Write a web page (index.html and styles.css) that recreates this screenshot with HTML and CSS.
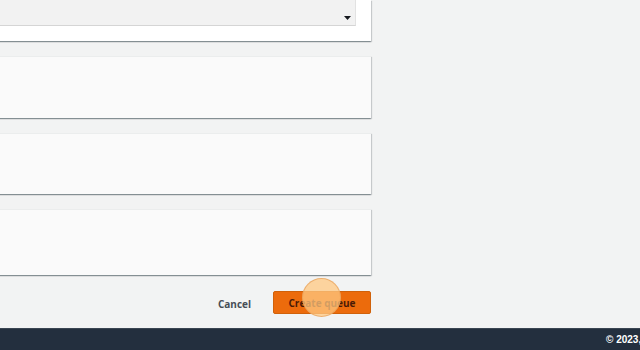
FILE: index.html
```html
<!DOCTYPE html>
<html>
<head>
<meta charset="utf-8">
<link rel="stylesheet" href="styles.css">
</head>
<body>
<div class="page">
  <main class="column">
    <section class="card card-top">
      <div class="field">
        <svg class="caret" width="7" height="4" viewBox="0 0 7 4"><path d="M0 0H7L3.5 4Z" fill="#16191f"/></svg>
      </div>
    </section>
    <section class="card card-a"></section>
    <section class="card card-b"></section>
    <section class="card card-c"></section>
    <div class="actions">
      <button class="btn-link">Cancel</button>
      <button class="btn-primary">Create queue<span class="pointer"></span></button>
    </div>
  </main>
  <footer class="footer"><span class="copy">© 2023,</span></footer>
</div>
</body>
</html>
```
FILE: styles.css
```css
* { box-sizing: border-box; }
html, body { margin: 0; padding: 0; }
body {
  background: #f2f3f3;
  font-family: "Open Sans", "Noto Sans", sans-serif;
  width: 640px;
  height: 350px;
  overflow: hidden;
}
.page {
  height: 350px;
  display: flex;
  flex-direction: column;
}
.column {
  flex: 1;
  width: 391px;
  margin-left: -20px;
  display: flex;
  flex-direction: column;
  gap: 15px;
}
.card {
  background: #fafafa;
  box-shadow: 0 1px 1px 0 rgba(0,20,30,.25), 1px 1px 1px 0 rgba(0,20,30,.14), -1px 1px 1px 0 rgba(0,20,30,.14);
  border-top: 1px solid #ebeded;
  flex: none;
}
.card-top {
  background: #fff;
  height: 41px;
  border-top: none;
  padding: 0 15px 15px 20px;
}
.field {
  height: 26px;
  background: #f2f2f2;
  border-bottom: 1px solid #d5d5d5;
  border-right: 1px solid #e2e2e2;
  position: relative;
}
.caret {
  position: absolute;
  right: 4px;
  top: 16px;
}
.card-a { height: 62px; }
.card-b { height: 61px; }
.card-c { height: 66px; }
.actions {
  display: flex;
  justify-content: flex-end;
  align-items: center;
  gap: 22px;
  margin-top: 1px;
}
.btn-link {
  background: none;
  border: none;
  font-family: inherit;
  font-weight: 700;
  font-size: 10px;
  color: #464d56;
  padding: 0;
  margin-top: 2px;
}
.btn-primary {
  position: relative;
  width: 98px;
  height: 23px;
  background: #ec6b0c;
  border: 1px solid #d0610a;
  border-radius: 2px;
  font-family: inherit;
  font-weight: 700;
  font-size: 10px;
  color: #4a1a06;
  padding: 0;
}
.pointer {
  position: absolute;
  left: 28px;
  top: -14px;
  width: 39px;
  height: 39px;
  border-radius: 50%;
  background: rgba(255, 200, 130, 0.75);
  border: 1px solid rgba(230, 160, 90, 0.7);
}
.footer {
  height: 22px;
  background: #232f3e;
  border-top: 1px solid #3a4552;
  display: flex;
  align-items: center;
  padding-left: 606px;
  white-space: nowrap;
  overflow: hidden;
}
.copy {
  color: #fff;
  font-family: "Liberation Sans", Arial, sans-serif;
  font-weight: 700;
  font-size: 10px;
}
```
